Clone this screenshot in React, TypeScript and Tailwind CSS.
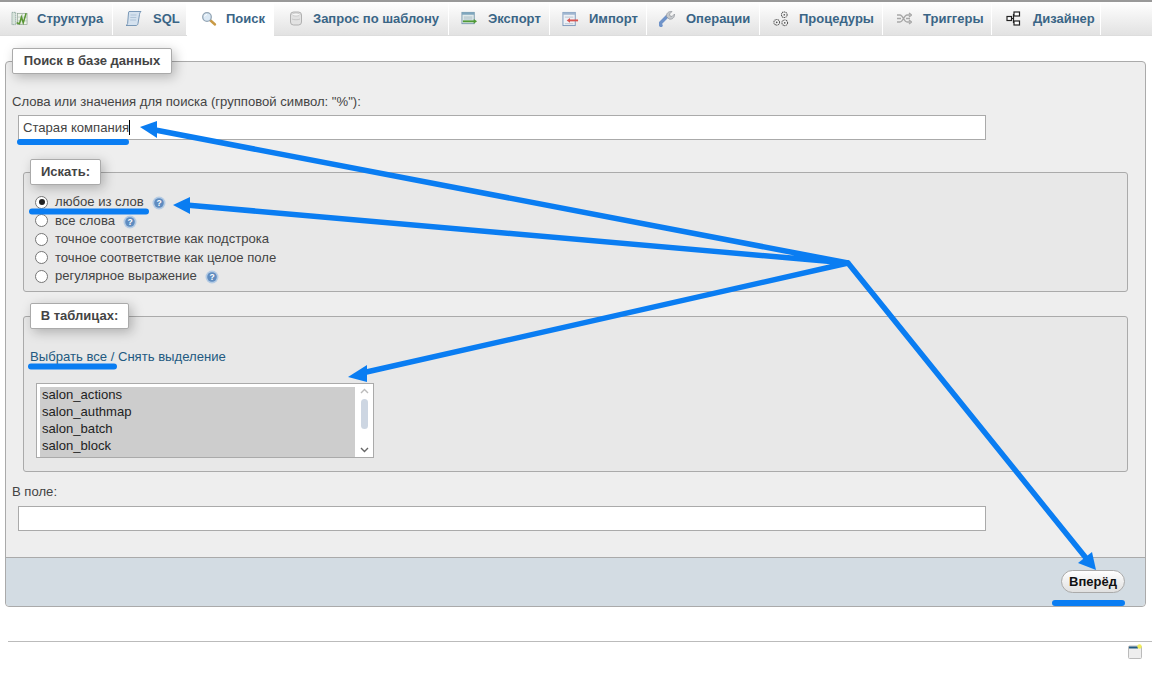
import React from 'react';

const font = "font-['Liberation_Sans',Arial,sans-serif]";

const IconStructure = () => (
  <svg width="18" height="17" viewBox="0 0 18 17">
    <rect x="1" y="2" width="4" height="13" fill="#d8e4dc" stroke="#7f9a92" strokeWidth="0.8" strokeDasharray="1.500 0.600" />
    <rect x="7" y="3" width="10" height="12" fill="#eef3ea" stroke="#8aa08f" strokeWidth="0.7" />
    <path d="M7 7h10M7 11h10M12 3v12" stroke="#a9bdaf" strokeWidth="0.7" />
    <path d="M6 13l3 1 2-7 2 6 3-10" fill="none" stroke="#5a9634" strokeWidth="1.600" />
  </svg>
);

const IconSql = () => (
  <svg width="17" height="17" viewBox="0 0 17 17">
    <path d="M4 1.500h12c-1 1-1.500 2-1.500 3L13 13.500c0 1-1 2-2 2H1c1-.5 1.500-1 1.600-2L3.500 3c0-.8.2-1.200.5-1.500z" fill="#d5e2ef" stroke="#6d8fb0" strokeWidth="0.9" />
    <path d="M5.500 5h6M5.300 7.500h6M5.100 10h6" stroke="#a5bcd2" strokeWidth="0.8" />
  </svg>
);

const IconSearch = () => (
  <svg width="16" height="16" viewBox="0 0 16 16">
    <path d="M9 9l5 4.500" stroke="#c99a45" strokeWidth="2.400" strokeLinecap="round" />
    <circle cx="6" cy="6" r="4.300" fill="#dbe9f5" stroke="#93a5b5" strokeWidth="1.300" />
    <path d="M3.500 5.500a2.800 2.800 0 0 1 2.500-2" stroke="#fff" strokeWidth="1" fill="none" />
  </svg>
);

const IconDb = () => (
  <svg width="14" height="15" viewBox="0 0 14 15">
    <rect x="1.500" y="1" width="11" height="13" rx="3" fill="#e2e2e2" stroke="#a9a9a9" strokeWidth="0.9" />
    <ellipse cx="7" cy="3.500" rx="4" ry="1.500" fill="#f6f6f6" stroke="#b5b5b5" strokeWidth="0.6" />
    <path d="M3 8c2 1 6 1 8 0" stroke="#bbb" strokeWidth="0.7" fill="none" />
  </svg>
);

const IconExport = () => (
  <svg width="18" height="15" viewBox="0 0 18 15">
    <rect x="1" y="1" width="13" height="12" fill="#dfe9ea" stroke="#6f93a8" strokeWidth="0.9" />
    <path d="M1 1h13v2.500H1z" fill="#7ea6bd" />
    <path d="M3 6h9M3 8h9" stroke="#9ab1bd" strokeWidth="0.8" />
    <path d="M2 10.500h12" stroke="#4f9a35" strokeWidth="2" />
    <path d="M13.500 8l3.500 2.500-3.500 2.500z" fill="#4f9a35" />
  </svg>
);

const IconImport = () => (
  <svg width="18" height="16" viewBox="0 0 18 16">
    <rect x="1" y="1" width="13" height="14" fill="#eef1f6" stroke="#6f8fb5" strokeWidth="0.9" />
    <path d="M1 1h13v2.500H1z" fill="#9fb6d0" />
    <path d="M3 6h9M3 13h9" stroke="#a9b8c8" strokeWidth="0.8" />
    <path d="M8 9.500h9" stroke="#d9534f" strokeWidth="2" />
    <path d="M8.500 7L5 9.500 8.500 12z" fill="#d9534f" />
  </svg>
);

const IconWrench = () => (
  <svg width="17" height="17" viewBox="0 0 17 17">
    <path d="M2 15.500c-1-1-1-2 0-3l6-6" stroke="#6f93c9" strokeWidth="3.400" strokeLinecap="round" fill="none" />
    <path d="M7.500 6.500c-.5-3 2-5.500 5.500-5l-2.500 2.500.5 2 2 .5L15.500 4c.5 3.500-2.500 6-5.500 5z" fill="#c5c8cc" stroke="#8f9499" strokeWidth="0.7" />
  </svg>
);

const IconRoutines = () => (
  <svg width="18" height="18" viewBox="0 0 18 18" fill="#f4f4f4" stroke="#555" strokeWidth="1.100">
    <circle cx="13" cy="4.500" r="3" strokeDasharray="1.300 0.600" />
    <circle cx="5" cy="12.500" r="3" strokeDasharray="1.300 0.600" />
    <circle cx="13.500" cy="13" r="3" strokeDasharray="1.300 0.600" />
    <circle cx="13" cy="4.500" r="0.900" fill="#555" stroke="none" />
    <circle cx="5" cy="12.500" r="0.900" fill="#555" stroke="none" />
    <circle cx="13.500" cy="13" r="0.900" fill="#555" stroke="none" />
  </svg>
);

const IconTriggers = () => (
  <svg width="15" height="13" viewBox="0 0 15 13" fill="none" stroke="#a8a8a8" strokeWidth="1.400">
    <path d="M0 3h3c3 0 4 7 7 7h3M0 10h3c3 0 4-7 7-7h3M0 6.500h4M9 6.500h4" />
    <path d="M12 1l2.500 2-2.500 2M12 8l2.500 2-2.500 2" />
  </svg>
);

const IconDesigner = () => (
  <svg width="15" height="15" viewBox="0 0 15 15" fill="#fff" stroke="#222" strokeWidth="1.200">
    <path d="M5 7.500h3M7.500 3v9" fill="none" />
    <rect x="1" y="5.500" width="4.500" height="4" />
    <rect x="8" y="1" width="5.500" height="4" />
    <rect x="8" y="10" width="5.500" height="4" />
  </svg>
);

const tabs = [
  { label: 'Структура', icon: IconStructure, w: 'w-[113px]', gap: 'gap-[9px]', pl: 'pl-[11px]' },
  { label: 'SQL', icon: IconSql, w: 'w-[74px]', gap: 'gap-[11px]', pl: 'pl-[12px]' },
  { label: 'Поиск', icon: IconSearch, w: 'w-[87px]', gap: 'gap-[9px]', pl: 'pl-[13px]', active: true },
  { label: 'Запрос по шаблону', icon: IconDb, w: 'w-[175px]', gap: 'gap-[9px]', pl: 'pl-[13px]' },
  { label: 'Экспорт', icon: IconExport, w: 'w-[101px]', gap: 'gap-[10px]', pl: 'pl-[12px]' },
  { label: 'Импорт', icon: IconImport, w: 'w-[97px]', gap: 'gap-[10px]', pl: 'pl-[12px]' },
  { label: 'Операции', icon: IconWrench, w: 'w-[113px]', gap: 'gap-[10px]', pl: 'pl-[12px]' },
  { label: 'Процедуры', icon: IconRoutines, w: 'w-[123px]', gap: 'gap-[10px]', pl: 'pl-[12px]' },
  { label: 'Триггеры', icon: IconTriggers, w: 'w-[109px]', gap: 'gap-[10px]', pl: 'pl-[13px]' },
  { label: 'Дизайнер', icon: IconDesigner, w: 'w-[109px]', gap: 'gap-[11px]', pl: 'pl-[13px]' },
];

const Help = () => (
  <svg width="14" height="14" viewBox="0 0 14 14" className="ml-[8px] mt-[2px]">
    <circle cx="7" cy="7" r="6.500" fill="#b4cbe4" />
    <circle cx="7" cy="7" r="4.800" fill="#5f8cc0" />
    <text x="7" y="10" fontSize="8.500" fontWeight="700" fill="#fff" textAnchor="middle" fontFamily="Liberation Sans">?</text>
  </svg>
);

const Legend = ({ children, className }: { children: React.ReactNode; className: string }) => (
  <div className={`absolute z-10 h-[26px] flex items-center justify-center bg-white border border-[#aaa] rounded-[2px] shadow-[3px_3px_12px_rgba(0,0,0,0.25)] font-bold text-[#444] text-[13px] ${className}`}>
    {children}
  </div>
);

const Radio = ({ label, checked, help }: { label: string; checked?: boolean; help?: boolean }) => (
  <div className="h-[18.500px] flex items-center">
    <span className="w-[13px] h-[13px] rounded-full border border-[#767676] bg-white flex items-center justify-center">
      {checked && <span className="w-[6px] h-[6px] rounded-full bg-[#222]" />}
    </span>
    <span className="ml-[7px] text-[#444]">{label}</span>
    {help && <Help />}
  </div>
);

const tables = ['salon_actions', 'salon_authmap', 'salon_batch', 'salon_block', 'salon_blocked_ips'];

// annotation strokes drawn over the page
const Arrows = () => (
  <svg className="absolute left-0 top-0 pointer-events-none z-20" width="1152" height="673" viewBox="0 0 1152 673">
    <g stroke="#0a7df2" strokeLinecap="round" fill="none">
      <path d="M848 263L150 129M848 263L186 205M848 263L362 373M848 263L1086 558" strokeWidth="5.500" />
      <path d="M20 142H126M32 211.500H146M31 366.500H114M1055 603H1122" strokeWidth="6" />
    </g>
    <g fill="#0a7df2">
      <path d="M140 127L157 121L157 138Z" />
      <path d="M173 205L190 197L190 214Z" />
      <path d="M348 377L367 365L367 382Z" />
      <path d="M1096 570L1078 563L1092 552Z" />
    </g>
  </svg>
);

export default function App() {
  return (
    <div className={`relative w-[1152px] h-[673px] overflow-hidden bg-white text-[13.100px] ${font}`}>
      <div className="h-[36px] flex border-t-[2px] border-[#999] border-b border-b-[#ddd] bg-gradient-to-b from-white to-[#e2e2e2]">
        {tabs.map((t) => (
          <div
            key={t.label}
            className={`flex items-center border-r border-white ${t.w} ${t.gap} ${t.pl} ${t.active ? 'bg-white h-[34px]' : 'h-[33px]'}`}
          >
            <span className="w-[17px] flex justify-center shrink-0"><t.icon /></span>
            <span className="font-bold text-[13px] text-[#3a6586] whitespace-nowrap">{t.label}</span>
          </div>
        ))}
      </div>

      <div className="relative pt-[25px] ml-[5px] w-[1141px]">
        <Legend className="left-[7px] top-[12px] w-[160px]">Поиск в базе данных</Legend>
        <div className="h-[546px] flex flex-col border border-[#aaa] rounded-[4px] bg-[#eeeeee]">
          <div className="px-[6px] pt-[33px] text-[#444] leading-[14px]">
            Слова или значения для поиска (групповой символ: "%"):
          </div>
          <div className="ml-[12px] mt-[6px] w-[968px] h-[25px] bg-white border border-[#aaa] flex items-center pl-[4px] text-[#444]">
            Старая компания<span className="w-px h-[15px] bg-black" />
          </div>

          <div className="relative ml-[17px] mt-[32px] w-[1105px]">
            <Legend className="left-[7px] -top-[13px] w-[71px]">Искать:</Legend>
            <div className="h-[120px] border border-[#aaa] rounded-[3px] bg-[#e8e8e8] pl-[11px] pt-[20px]">
              <Radio label="любое из слов" checked help />
              <Radio label="все слова" help />
              <Radio label="точное соответствие как подстрока" />
              <Radio label="точное соответствие как целое поле" />
              <Radio label="регулярное выражение" help />
            </div>
          </div>

          <div className="relative ml-[17px] mt-[24px] w-[1105px]">
            <Legend className="left-[7px] -top-[13px] w-[99px]">В таблицах:</Legend>
            <div className="h-[156px] border border-[#aaa] rounded-[3px] bg-[#e8e8e8] pl-[6px] pt-[32px]">
              <div className="text-[#235a81] leading-[16px]">Выбрать все / Снять выделение</div>
              <div className="ml-[6px] mt-[18px] w-[338px] h-[75px] bg-white border border-[#aaa] flex pl-[3px] pt-[3px] overflow-hidden">
                <div className="w-[315px] bg-[#cdcdcd] text-[#222] overflow-hidden pl-[2px]">
                  <div className="-mt-[1px]">
                    {tables.map((n) => (
                      <div key={n} className="h-[17px] leading-[17px]">{n}</div>
                    ))}
                  </div>
                </div>
                <div className="flex-1 flex flex-col items-center pb-[4px] pt-[1px]">
                  <svg width="9" height="6" viewBox="0 0 9 6"><path d="M1 5l3.500-3.500L8 5" stroke="#bbb" strokeWidth="1.400" fill="none" /></svg>
                  <div className="w-[7px] h-[30px] mt-[5px] rounded bg-[#cdd6e2]" />
                  <svg className="mt-auto" width="9" height="6" viewBox="0 0 9 6"><path d="M1 1l3.500 3.500L8 1" stroke="#666" strokeWidth="1.400" fill="none" /></svg>
                </div>
              </div>
            </div>
          </div>

          <div className="pl-[6px] mt-[13px] leading-[14px] text-[#444]">В поле:</div>
          <div className="ml-[12px] mt-[7px] w-[968px] h-[25px] bg-white border border-[#aaa]" />

          <div className="mt-[26px] flex-1 bg-[#d3dce3] border-t border-[#aaa] rounded-b-[4px] flex justify-end pr-[20px] pt-[12px]">
            <div className="w-[64px] h-[23px] rounded-full border border-[#aaa] bg-gradient-to-b from-white to-[#e0e0e0] flex items-center justify-center font-bold text-[13px] text-[#111]">
              Вперёд
            </div>
          </div>
        </div>
      </div>

      <div className="mt-[34px] ml-[8px] border-t border-[#bbb] flex justify-end pr-[10px] pt-[2px]">
        <svg width="14" height="15" viewBox="0 0 14 15">
          <rect x="0.500" y="2" width="13" height="12.500" rx="1" fill="#eeeeee" stroke="#bbb" />
          <path d="M1 3.500h9" stroke="#235a81" strokeWidth="2" />
          <circle cx="11.500" cy="2.500" r="2.200" fill="#f2ee5a" />
        </svg>
      </div>

      <Arrows />
    </div>
  );
}
